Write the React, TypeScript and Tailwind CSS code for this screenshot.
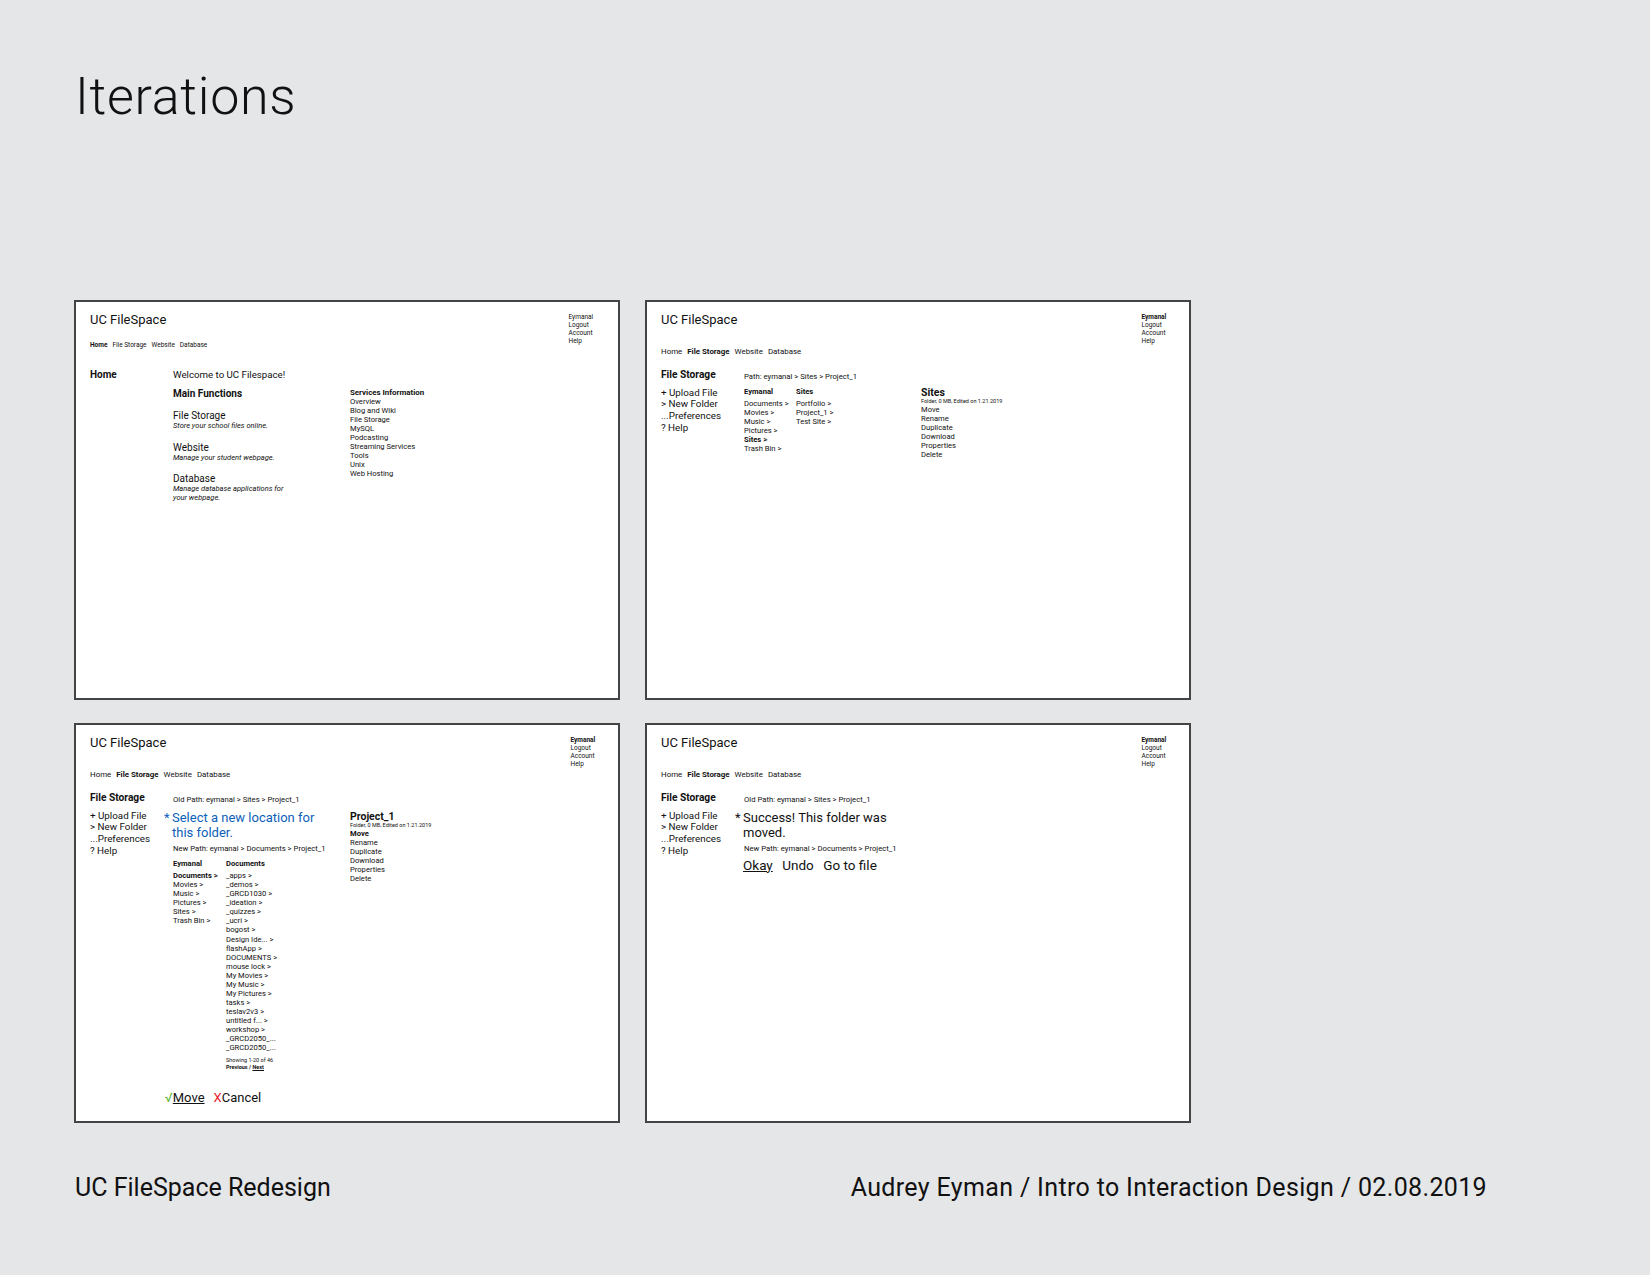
import type { ReactNode } from "react";

const font = "font-['Roboto','Noto_Sans',sans-serif]";

function Frame({ bold, navClass, accountClass, children }: { bold?: boolean; navClass: string; accountClass: string; children: ReactNode }) {
  return (
    <section className="h-[400px] w-[546px] border-2 border-[#444] bg-white px-[14px] pt-[9px] text-[#111]">
      <header className="flex h-[30px] items-start justify-between">
        <h2 className="text-[13px] leading-[18px]">UC FileSpace</h2>
        <ul className={`mt-[1.5px] text-[6.5px] leading-[8px] ${accountClass}`}>
          <li className={bold ? "font-bold" : ""}>Eymanal</li>
          <li>Logout</li>
          <li>Account</li>
          <li>Help</li>
        </ul>
      </header>
      <nav className={navClass}>
        <span className={bold ? "" : "font-bold"}>Home</span>
        <span className={bold ? "font-bold" : ""}>File Storage</span>
        <span>Website</span>
        <span>Database</span>
      </nav>
      {children}
    </section>
  );
}

function List({ items, boldItem }: { items: string[]; boldItem?: string }) {
  return (
    <ul className="text-[7.6px] leading-[9.05px]">
      {items.map((item, i) => (
        <li className={item === boldItem ? "font-bold" : ""} key={i}>{item}</li>
      ))}
    </ul>
  );
}

function Side() {
  return (
    <aside className="w-[83px] shrink-0">
      <h3 className="text-[10.2px] font-bold leading-[14px]">File Storage</h3>
      <ul className="mt-[5px] text-[9.8px] leading-[11.7px]">
        <li>+ Upload File</li>
        <li>&gt; New Folder</li>
        <li>...Preferences</li>
        <li>? Help</li>
      </ul>
    </aside>
  );
}

function Actions({ title, items, boldItem }: { title: string; items: string[]; boldItem?: string }) {
  return (
    <div>
      <h4 className="text-[10.5px] font-bold leading-[11px]">{title}</h4>
      <p className="mb-[1.2px] text-[5.5px] leading-[6px]">Folder, 0 MB, Edited on 1.21.2019</p>
      <List boldItem={boldItem} items={items} />
    </div>
  );
}

const folders = ["Documents >", "Movies >", "Music >", "Pictures >", "Sites >", "Trash Bin >"];
const actions = ["Move", "Rename", "Duplicate", "Download", "Properties", "Delete"];
const services = ["Overview", "Blog and Wiki", "File Storage", "MySQL", "Podcasting", "Streaming Services", "Tools", "Unix", "Web Hosting"];
const documents = ["_apps >", "_demos >", "_GRCD1030 >", "_ideation >", "_quizzes >", "_ucri >", "bogost >", "Design Ide... >", "flashApp >", "DOCUMENTS >", "mouse lock >", "My Movies >", "My Music >", "My Pictures >", "tasks >", "teslav2v3 >", "untitled f... >", "workshop >", "_GRCD2050_...", "_GRCD2050_..."];

const wideNav = "mt-[6.5px] flex h-[8px] gap-[5px] text-[7.9px] leading-[8px]";

function HomeFrame() {
  return (
    <Frame accountClass="w-[35.5px]" navClass="mt-[1px] flex h-[7px] gap-[5px] text-[6.5px] leading-[7px]">
      <div className="mt-[19px] flex">
        <h3 className="w-[83px] shrink-0 text-[10px] font-bold leading-[14px]">Home</h3>
        <div className="w-[177px] shrink-0">
          <p className="text-[9.7px] leading-[14px]">Welcome to UC Filespace!</p>
          <h4 className="mt-[4.7px] text-[10px] font-bold leading-[14px]">Main Functions</h4>
          <h5 className="mt-[10.7px] text-[10px] leading-[10px]">File Storage</h5>
          <p className="text-[7.5px] italic leading-[9px]">Store your school files online.</p>
          <h5 className="mt-[12.3px] text-[10px] leading-[10px]">Website</h5>
          <p className="text-[7.5px] italic leading-[9px]">Manage your student webpage.</p>
          <h5 className="mt-[12px] text-[10px] leading-[10px]">Database</h5>
          <p className="w-[125px] text-[7.5px] italic leading-[9px]">Manage database applications for your webpage.</p>
        </div>
        <div className="mt-[20px]">
          <h4 className="text-[7.9px] font-bold leading-[9px]">Services Information</h4>
          <List items={services} />
        </div>
      </div>
    </Frame>
  );
}

function BrowseFrame() {
  return (
    <Frame accountClass="w-[33.5px]" bold navClass={wideNav}>
      <div className="mt-[12px] flex">
        <Side />
        <div>
          <p className="mt-[4px] text-[7.7px] leading-[9px]">Path: eymanal &gt; Sites &gt; Project_1</p>
          <div className="mt-[6.3px] flex">
            <div className="w-[52px]">
              <h4 className="mb-[3.4px] text-[7.6px] font-bold leading-[9px]">Eymanal</h4>
              <List boldItem="Sites >" items={folders} />
            </div>
            <div className="w-[125px]">
              <h4 className="mb-[3.4px] text-[7.6px] font-bold leading-[9px]">Sites</h4>
              <List items={["Portfolio >", "Project_1 >", "Test Site >"]} />
            </div>
            <Actions items={actions} title="Sites" />
          </div>
        </div>
      </div>
    </Frame>
  );
}

function MoveFrame() {
  return (
    <Frame accountClass="w-[33.5px]" bold navClass={wideNav}>
      <div className="mt-[12px] flex">
        <Side />
        <div className="flex">
          <div className="w-[177px]">
            <p className="mt-[4px] text-[7.7px] leading-[9px]">Old Path: eymanal &gt; Sites &gt; Project_1</p>
            <p className="relative ml-[-1px] mt-[6px] w-[150px] text-[13px] leading-[15.7px] text-[#0d5fb8]">
              <span className="absolute left-[-8px]">*</span>Select a new location for this folder.
            </p>
            <p className="mt-[2.7px] text-[7.7px] leading-[9px]">New Path: eymanal &gt; Documents &gt; Project_1</p>
            <div className="mt-[6.3px] flex">
              <div className="w-[53px]">
                <h4 className="mb-[3.3px] text-[7.6px] font-bold leading-[9px]">Eymanal</h4>
                <List boldItem="Documents >" items={folders} />
              </div>
              <div>
                <h4 className="mb-[3.3px] text-[7.6px] font-bold leading-[9px]">Documents</h4>
                <List items={documents} />
                <p className="mt-[4.8px] text-[5.5px] leading-[6.7px]">Showing 1-20 of 46</p>
                <p className="text-[5.5px] font-bold leading-[6.7px]">Previous / <span className="underline">Next</span></p>
              </div>
            </div>
          </div>
          <div className="mt-[20px]">
            <Actions boldItem="Move" items={actions} title="Project_1" />
          </div>
        </div>
      </div>
      <div className="ml-[75px] mt-[18.5px] flex text-[13px] leading-[17px]">
        <span className="text-[#5cb531]">√</span>
        <span className="underline">Move</span>
        <span className="ml-[9px] text-[#e8202a]">X</span>
        <span>Cancel</span>
      </div>
    </Frame>
  );
}

function DoneFrame() {
  return (
    <Frame accountClass="w-[33.5px]" bold navClass={wideNav}>
      <div className="mt-[12px] flex">
        <Side />
        <div className="w-[165px]">
          <p className="mt-[4px] text-[7.7px] leading-[9px]">Old Path: eymanal &gt; Sites &gt; Project_1</p>
          <p className="relative ml-[-1px] mt-[6px] text-[13px] leading-[15.7px]">
            <span className="absolute left-[-8px]">*</span>Success! This folder was moved.
          </p>
          <p className="mt-[2.7px] text-[7.7px] leading-[9px]">New Path: eymanal &gt; Documents &gt; Project_1</p>
          <div className="ml-[-1px] mt-[4px] flex gap-[9.5px] text-[13.5px] leading-[17px]">
            <span className="underline">Okay</span>
            <span>Undo</span>
            <span>Go to file</span>
          </div>
        </div>
      </div>
    </Frame>
  );
}

export default function App() {
  return (
    <main className={`h-[1275px] w-[1650px] overflow-hidden bg-[#e5e6e8] pl-[74px] pt-[65px] text-[#111] ${font}`}>
      <h1 className="ml-[1px] h-[235px] text-[52px] font-light leading-[64px] tracking-[0.7px]">Iterations</h1>
      <div className="grid w-[1117px] grid-cols-[546px_546px] gap-x-[25px] gap-y-[23px]">
        <HomeFrame />
        <BrowseFrame />
        <MoveFrame />
        <DoneFrame />
      </div>
      <footer className="ml-[1px] mt-[49px] flex w-[1412px] justify-between text-[25px] leading-[32px]">
        <span>UC FileSpace Redesign</span>
        <span className="tracking-[0.35px]">Audrey Eyman / Intro to Interaction Design / 02.08.2019</span>
      </footer>
    </main>
  );
}
